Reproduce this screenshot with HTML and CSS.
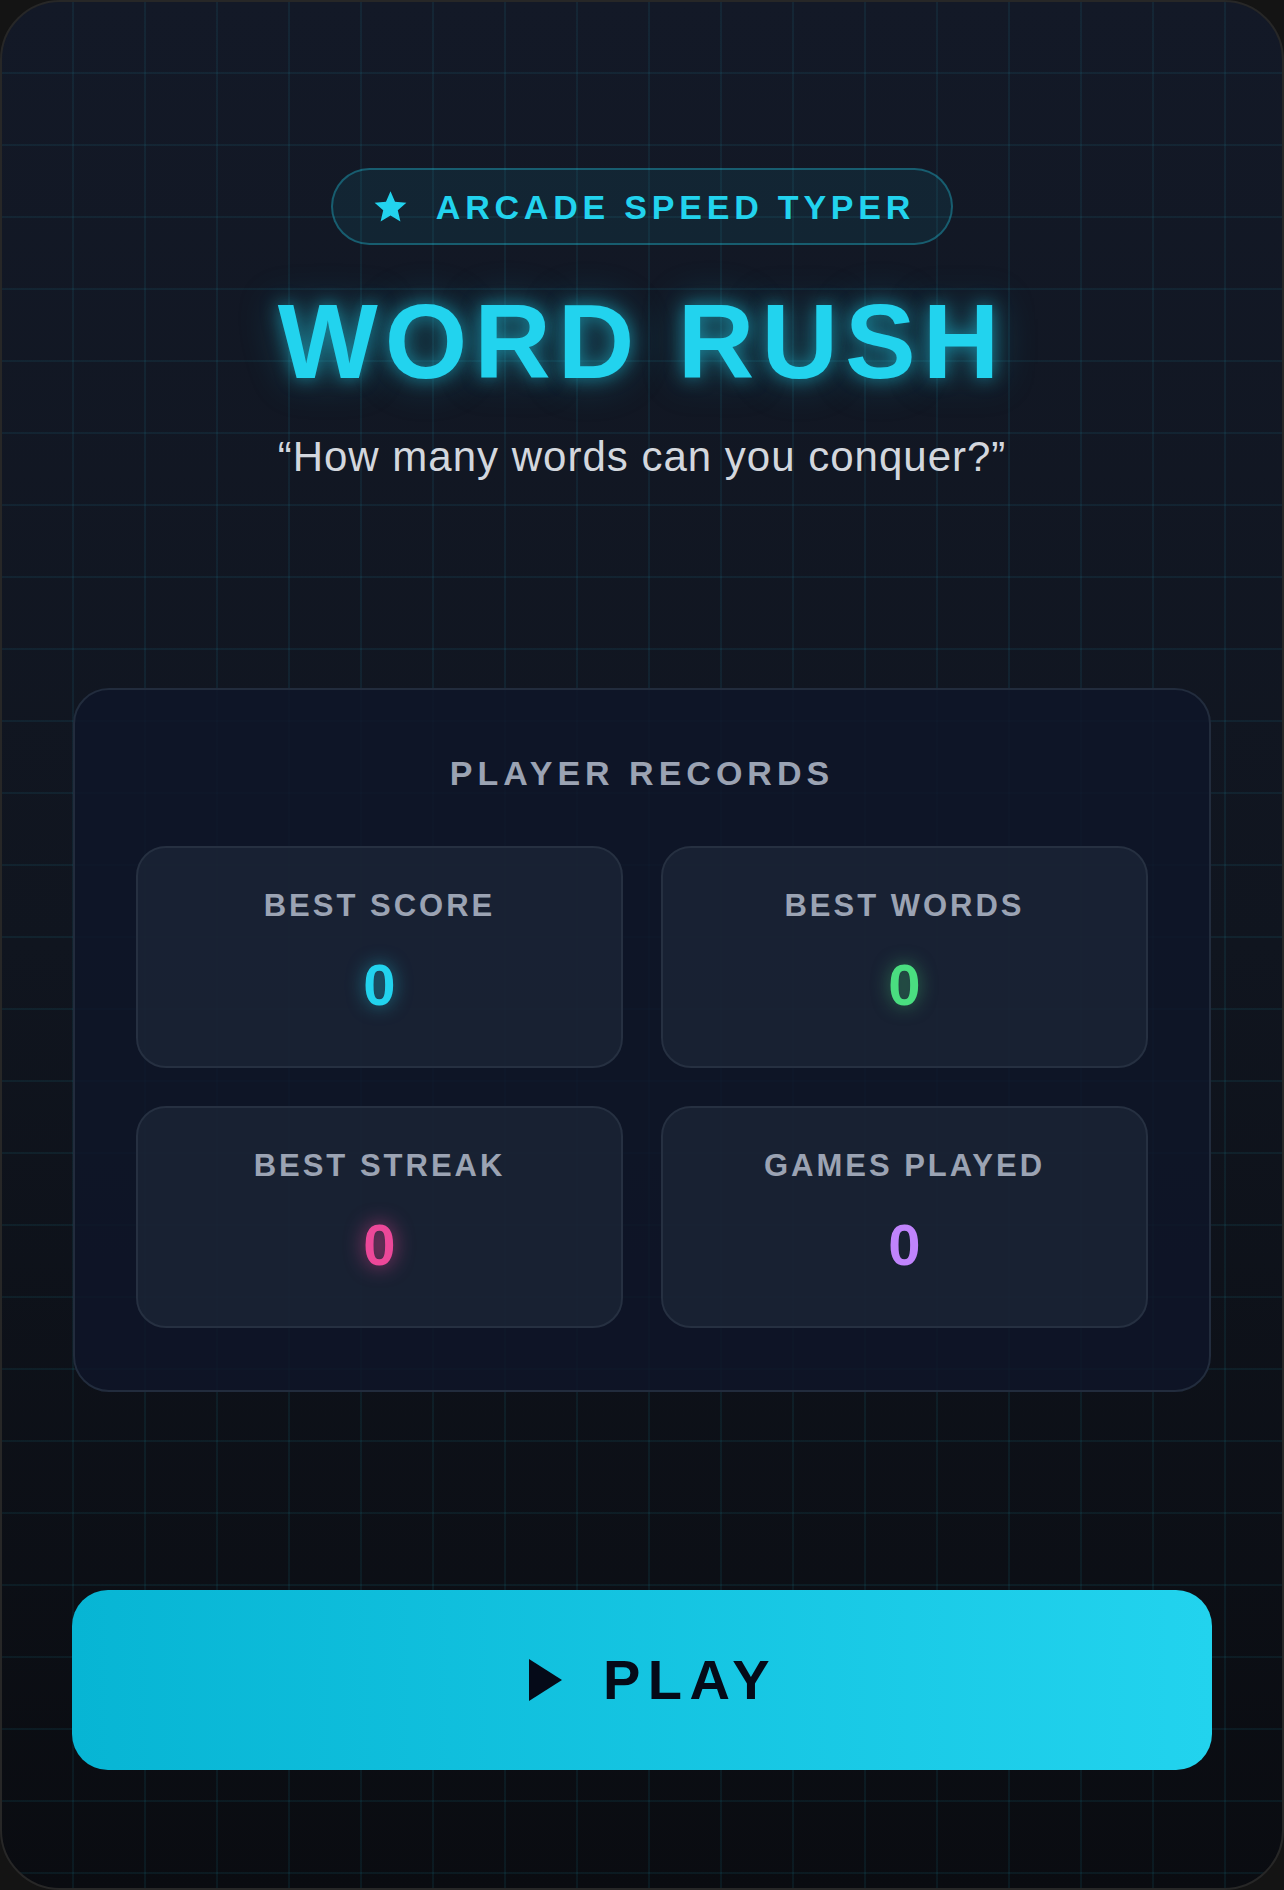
FILE: index.html
```html
<!DOCTYPE html>
<html lang="en">
<head>
<meta charset="utf-8">
<title>Word Rush</title>
<link rel="stylesheet" href="styles.css">
</head>
<body>
<div class="screen">
  <div class="badge">
    <svg class="badge-star" viewBox="0 0 24 24" aria-hidden="true">
      <path d="M12 1.5l3.1 7.2 7.8.7-5.9 5.2 1.8 7.7L12 18.2l-6.8 4.1 1.8-7.7-5.9-5.2 7.8-.7z"/>
    </svg>
    <span class="badge-text">ARCADE SPEED TYPER</span>
  </div>
  <h1 class="title">WORD RUSH</h1>
  <p class="subtitle">“How many words can you conquer?”</p>

  <section class="records">
    <h2 class="records-title">PLAYER RECORDS</h2>
    <div class="records-grid">
      <div class="stat">
        <div class="stat-label">BEST SCORE</div>
        <div class="stat-value cyan">0</div>
      </div>
      <div class="stat">
        <div class="stat-label">BEST WORDS</div>
        <div class="stat-value green">0</div>
      </div>
      <div class="stat">
        <div class="stat-label">BEST STREAK</div>
        <div class="stat-value pink">0</div>
      </div>
      <div class="stat">
        <div class="stat-label">GAMES PLAYED</div>
        <div class="stat-value purple">0</div>
      </div>
    </div>
  </section>

  <button class="play" type="button">
    <svg class="play-icon" viewBox="0 0 33 42" aria-hidden="true"><path d="M0 0L33 21L0 42z"/></svg>
    <span class="play-text">PLAY</span>
  </button>
</div>
</body>
</html>
```

FILE: styles.css
```css
* { box-sizing: border-box; }

html, body {
  margin: 0;
  padding: 0;
  background: #141414;
}

body {
  width: 1284px;
  height: 1890px;
  font-family: "Liberation Sans", Arial, sans-serif;
}

.screen {
  width: 1284px;
  height: 1890px;
  border-radius: 60px;
  border: 2px solid #272727;
  overflow: hidden;
  display: flex;
  flex-direction: column;
  align-items: center;
  background-color: #0f131c;
  background-image:
    linear-gradient(to right, rgba(34, 211, 238, 0.07) 2px, transparent 2px),
    linear-gradient(to bottom, rgba(34, 211, 238, 0.07) 2px, transparent 2px),
    linear-gradient(180deg, #131927 0%, #10151f 50%, #0a0c11 100%);
  background-size: 72px 72px, 72px 72px, 100% 100%;
  background-origin: border-box;
}

.badge {
  margin-top: 166px;
  height: 77px;
  display: flex;
  align-items: center;
  gap: 28px;
  padding: 0 36px 0 40px;
  border: 2px solid rgba(34, 211, 238, 0.32);
  border-radius: 40px;
  background: rgba(34, 211, 238, 0.07);
}

.badge-star {
  width: 35px;
  height: 35px;
  fill: #22d3ee;
  flex: none;
}

.badge-text {
  font-size: 34px;
  line-height: 1;
  font-weight: 700;
  letter-spacing: 4.8px;
  color: #22d3ee;
}

.title {
  margin: 43px 0 0;
  font-size: 106px;
  line-height: 1;
  font-weight: 700;
  letter-spacing: 7px;
  color: #22d3ee;
  text-shadow: 0 0 18px rgba(34, 211, 238, 0.55), 0 0 42px rgba(34, 211, 238, 0.35);
}

.subtitle {
  margin: 42px 0 0;
  font-size: 42px;
  line-height: 1;
  letter-spacing: 1px;
  color: #d3d7de;
}

.records {
  margin-top: 210px;
  width: 1138px;
  padding: 66px 61px 62px;
  border: 2px solid #222c3d;
  border-radius: 36px;
  background: rgba(14, 21, 40, 0.84);
  display: flex;
  flex-direction: column;
  align-items: center;
}

.records-title {
  margin: 0;
  font-size: 34px;
  line-height: 1;
  font-weight: 700;
  letter-spacing: 5px;
  color: #9ba3b3;
}

.records-grid {
  margin-top: 56px;
  width: 100%;
  display: grid;
  grid-template-columns: 1fr 1fr;
  gap: 38px;
}

.stat {
  height: 222px;
  padding: 42px 10px 0;
  border: 2px solid #263041;
  border-radius: 30px;
  background: rgba(30, 40, 58, 0.64);
  display: flex;
  flex-direction: column;
  align-items: center;
}

.stat-label {
  font-size: 31px;
  line-height: 1;
  font-weight: 700;
  letter-spacing: 3px;
  color: #9ba3b3;
}

.stat-value {
  margin-top: 35px;
  font-size: 58px;
  line-height: 1;
  font-weight: 700;
}

.cyan { color: #22d3ee; text-shadow: 0 0 18px rgba(34, 211, 238, 0.55); }
.green { color: #4ade80; text-shadow: 0 0 18px rgba(74, 222, 128, 0.5); }
.pink { color: #ec4899; text-shadow: 0 0 20px rgba(236, 72, 153, 0.75); }
.purple { color: #c084fc; }

.play {
  margin-top: 198px;
  width: 1140px;
  height: 180px;
  border: none;
  border-radius: 36px;
  padding: 0 0 0 22px;
  background: linear-gradient(90deg, #07b5d4 0%, #22d3ee 100%);
  display: flex;
  align-items: center;
  justify-content: center;
  gap: 41px;
  font-family: "Liberation Sans", Arial, sans-serif;
  cursor: pointer;
}

.play-icon {
  width: 33px;
  height: 42px;
  fill: #050a18;
  flex: none;
}

.play-text {
  font-size: 56px;
  line-height: 1;
  font-weight: 700;
  letter-spacing: 7.4px;
  color: #050a18;
}
```
